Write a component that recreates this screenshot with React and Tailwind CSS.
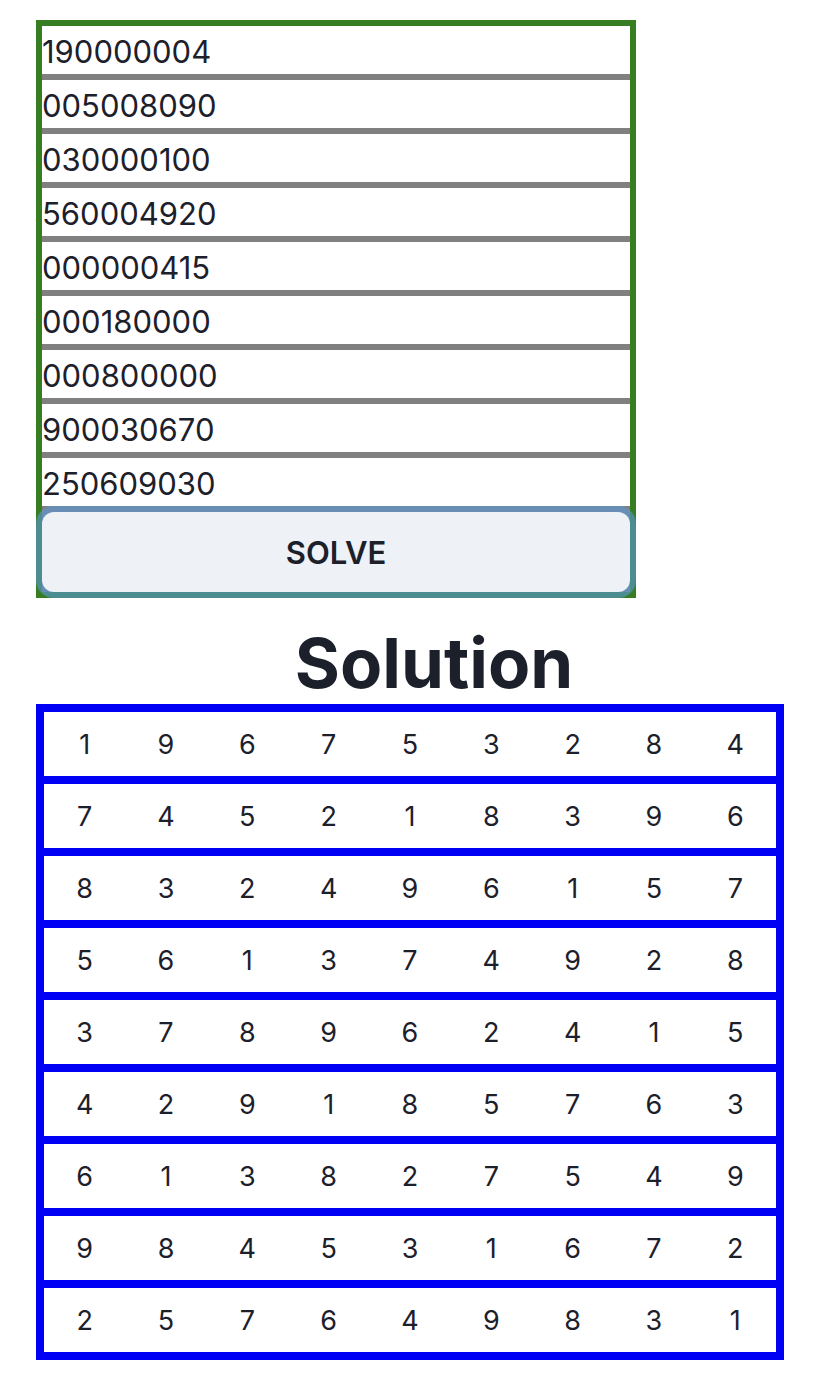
import { useState } from "react";

const initialRows = [
  "190000004",
  "005008090",
  "030000100",
  "560004920",
  "000000415",
  "000180000",
  "000800000",
  "900030670",
  "250609030",
];

const solution = [
  "196753284",
  "745218396",
  "832496157",
  "561374928",
  "378962415",
  "429185763",
  "613827549",
  "984531672",
  "257649831",
];

function PuzzleForm() {
  const [rows, setRows] = useState(initialRows);

  const updateRow = (index, value) =>
    setRows(rows.map((row, i) => (i === index ? value : row)));

  return (
    <form
      className="grid w-full max-w-[600px] gap-[6px] border-[6px] border-[#377e22] bg-[#808080]"
      onSubmit={(event) => event.preventDefault()}
    >
      {rows.map((row, i) => (
        <input
          key={i}
          type="text"
          aria-label={`Row ${i + 1}`}
          value={row}
          onChange={(event) => updateRow(i, event.target.value)}
          className="h-12 w-full min-w-0 bg-white pt-[2px] text-[31px] leading-[44px] outline-none"
        />
      ))}
      <button
        type="submit"
        className="h-20 w-full rounded-xl bg-[#eef1f6] pt-[2px] text-[31px] leading-[38px] font-semibold shadow-[0_0_0_6px_rgba(88,151,218,0.6)]"
      >
        SOLVE
      </button>
    </form>
  );
}

function SolutionTable() {
  return (
    <table
      aria-labelledby="solution-heading"
      className="w-full table-fixed border-separate border-spacing-0 border-x-8 border-t-8 border-[#0000f5]"
    >
      <tbody>
        {solution.map((row) => (
          <tr key={row}>
            {row.split("").map((digit, i) => (
              <td
                key={i}
                className="h-[72px] border-b-8 border-[#0000f5] p-0 pt-[2px] text-center text-[27px] leading-[42px]"
              >
                {digit}
              </td>
            ))}
          </tr>
        ))}
      </tbody>
    </table>
  );
}

export default function App() {
  return (
    <main className="bg-white pt-5 pr-[34px] pb-6 pl-9 font-['Inter',sans-serif] text-[#1c202b]">
      <PuzzleForm />
      <h1
        id="solution-heading"
        className="pt-6 pl-12 text-center text-[69px] leading-[82px] font-bold"
      >
        Solution
      </h1>
      <SolutionTable />
    </main>
  );
}
